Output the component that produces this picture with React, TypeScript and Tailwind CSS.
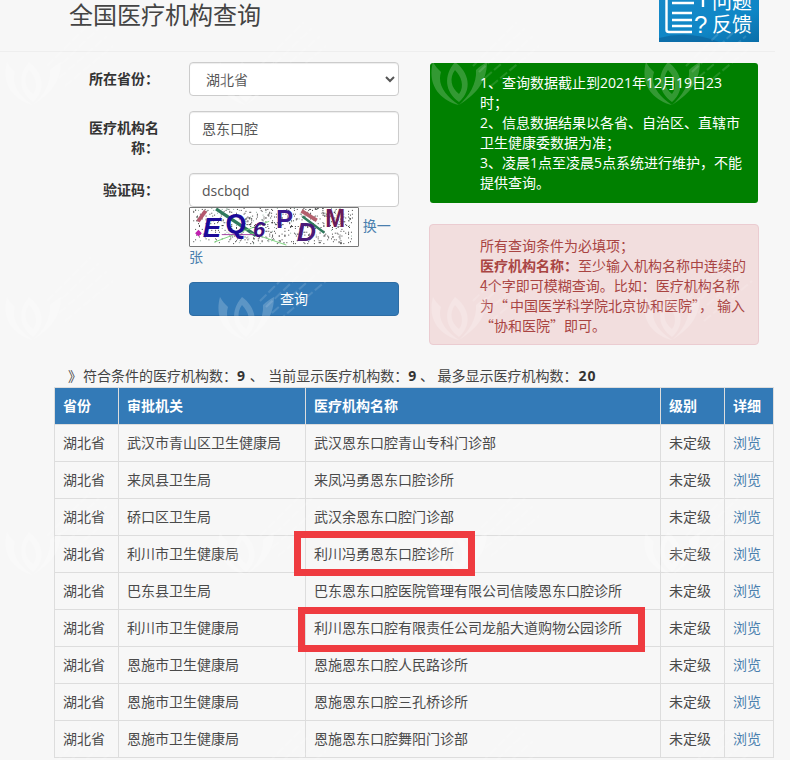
const COLON = "\uFF1A";
const SEMI = "\uFF1B";
const COMMA = "\uFF0C";

const rows: [string, string][] = [
  ["武汉市青山区卫生健康局", "武汉恩东口腔青山专科门诊部"],
  ["来凤县卫生局", "来凤冯勇恩东口腔诊所"],
  ["硚口区卫生局", "武汉余恩东口腔门诊部"],
  ["利川市卫生健康局", "利川冯勇恩东口腔诊所"],
  ["巴东县卫生局", "巴东恩东口腔医院管理有限公司信陵恩东口腔诊所"],
  ["利川市卫生健康局", "利川恩东口腔有限责任公司龙船大道购物公园诊所"],
  ["恩施市卫生健康局", "恩施恩东口腔人民路诊所"],
  ["恩施市卫生健康局", "恩施恩东口腔三孔桥诊所"],
  ["恩施市卫生健康局", "恩施恩东口腔舞阳门诊部"],
];

function noise(i: number, seed: number) {
  const v = Math.sin(i * seed) * 43758.5453;
  return v - Math.floor(v);
}

const dots = Array.from({ length: 620 }, (_, i) => ({
  x: Math.floor(noise(i + 1, 12.9898) * 168),
  y: Math.floor(noise(i + 1, 78.233) * 38),
}));

function Captcha() {
  return (
    <svg width="170" height="40" viewBox="0 0 170 40" className="inline-block align-middle border border-[#777] rounded-[1px] bg-white">
      {dots.map((d, i) => (
        <rect key={i} x={d.x} y={d.y} width="1" height="1" fill={i % 7 === 0 ? "#8a9" : "#333"} />
      ))}
      <line x1="24" y1="1" x2="66" y2="29" stroke="#2f7a5c" strokeWidth="3.5" />
      <line x1="5" y1="14" x2="13" y2="3" stroke="#b4586e" strokeWidth="4" />
      <line x1="114" y1="3" x2="130" y2="13" stroke="#b4606e" strokeWidth="4" />
      <line x1="115" y1="9" x2="138" y2="26" stroke="#2f7a5c" strokeWidth="2.5" />
      <line x1="22" y1="36" x2="80" y2="14" stroke="#7cd67c" strokeWidth="1" />
      <line x1="60" y1="26" x2="98" y2="39" stroke="#7cd67c" strokeWidth="1" />
      <line x1="30" y1="28" x2="64" y2="28" stroke="#a040a0" strokeWidth="1" />
      <rect x="3" y="24" width="5" height="5" fill="#c020b0" transform="rotate(45 5.5 26.5)" />
      <g fontFamily="'Liberation Sans', sans-serif" fontWeight="700">
        <text x="10" y="31" fontSize="29" fontStyle="italic" fill="#1c0a98">E</text>
        <text x="34" y="26" fontSize="30" fill="#1c0a98" textLength="22" lengthAdjust="spacingAndGlyphs">Q</text>
        <text x="63" y="31" fontSize="23" fontStyle="italic" fill="#3a1080">6</text>
        <text x="87" y="21" fontSize="27" fill="#3a1a90">P</text>
        <text x="109" y="35" fontSize="28" fontStyle="italic" fill="#4a1a78">D</text>
        <text x="139" y="20" fontSize="28" fill="#6a1a58" textLength="21" lengthAdjust="spacingAndGlyphs">M</text>
      </g>
    </svg>
  );
}

function Logo() {
  return (
    <svg width="100" height="42" viewBox="0 0 100 42" className="block">
      <defs>
        <linearGradient id="lg" x1="0" y1="0" x2="1" y2="1">
          <stop offset="0" stopColor="#1689c8" />
          <stop offset="0.6" stopColor="#0f86c6" />
          <stop offset="1" stopColor="#0a6ea8" />
        </linearGradient>
      </defs>
      <rect width="100" height="42" fill="url(#lg)" />
      <path d="M0 38 Q30 30 60 42 L0 42 Z" fill="#0b5f97" opacity="0.6" />
      <path d="M7.5 -2 V30 Q7.5 32 10 32 H33" fill="none" stroke="#fff" strokeWidth="2.4" />
      <path d="M13 3 H35 M13 13 H33 M13 20 H33 M13 26 H33" stroke="#fff" strokeWidth="2.6" />
      <path d="M44 -2 V7" stroke="#fff" strokeWidth="2.4" />
      <text x="35" y="33" fontSize="24" fill="#fff" fontFamily="'Liberation Sans', sans-serif">?</text>
      <g fill="#fff" fontSize="20" fontFamily="'Noto Sans CJK SC', sans-serif">
        <text x="53" y="9">问题</text>
        <text x="53" y="32">反馈</text>
      </g>
    </svg>
  );
}

function Watermark() {
  return (
    <svg width="790" height="760" className="absolute left-0 top-0 pointer-events-none">
      <defs>
        <pattern id="wm" x="3" y="0" width="213" height="235" patternUnits="userSpaceOnUse">
          <g fill="#fff" opacity="0.2">
            <path d="M30 105 C10 100 -2 84 4 62 C6 66 9 69 12 72 C8 84 16 96 30 105 Z" />
            <path d="M30 105 C44 96 58 84 58 62 C54 64 50 67 47 70 C48 84 40 96 30 105 Z" />
            <path fillRule="evenodd" d="M30 102 C16 92 14 76 26 62 C40 72 44 90 30 102 Z M30 94 C36 86 32 76 26 70 C20 78 22 88 30 94 Z" />
          </g>
          <g fill="none" stroke="#fff" strokeWidth="2" opacity="0.13" strokeDasharray="9 3">
            <path d="M44 66 L88 22 M50 72 L96 28 M56 78 L104 36 M62 86 L110 46" />
          </g>
        </pattern>
      </defs>
      <rect width="790" height="760" fill="url(#wm)" />
    </svg>
  );
}

const inputClass =
  "block w-[210px] h-[34px] px-3 bg-white border border-[#ccc] rounded text-sm text-[#555] shadow-[inset_0_1px_1px_rgba(0,0,0,0.075)]";
const labelClass = "w-[70px] ml-[89px] mr-[30px] pt-[7px] text-right font-bold text-[#333] shrink-0";
const cell = "border border-[#ddd] px-2 h-[37px] align-middle";
const head = "border border-[#ddd] px-2 h-[37px] align-middle text-left font-bold";

export default function App() {
  return (
    <div
      className="relative w-[790px] h-[760px] overflow-hidden bg-[#f7f7f7] text-sm leading-5 text-[#333]"
      style={{ fontFamily: "'Open Sans', 'Noto Sans CJK SC', sans-serif" }}
    >
      <header className="flex justify-between items-start w-[775px] h-[52px] border-b border-[#eee] pl-[69px] pr-4">
        <h1 className="text-2xl leading-[30px] text-[#444] font-normal">全国医疗机构查询</h1>
        <Logo />
      </header>

      <main className="flex pt-[10px] h-[314px]">
        <form className="w-[430px] shrink-0">
          <div className="flex mb-[15px]">
            <label className={labelClass}>所在省份{COLON}</label>
            <select defaultValue="湖北省" className={inputClass}>
              <option>湖北省</option>
            </select>
          </div>
          <div className="flex mb-[15px]">
            <label className={labelClass}>医疗机构名称{COLON}</label>
            <input readOnly value="恩东口腔" className={inputClass} />
          </div>
          <div className="flex mb-[15px]">
            <label className={labelClass}>验证码{COLON}</label>
            <div className="w-[210px]">
              <input readOnly value="dscbqd" className={inputClass} />
              <Captcha /> <a className="text-[#4a7fae]">换一张</a>
            </div>
          </div>
          <div className="ml-[189px] w-[210px] h-[34px] flex items-center justify-center bg-[#337ab7] border border-[#2e6da4] rounded text-white">
            查询
          </div>
        </form>

        <aside className="w-[328px] mt-px">
          <div className="h-[140px] bg-[#008000] rounded-[3px] text-white py-[10px] pl-[50px] pr-3">
            1、查询数据截止到2021年12月19日23时{SEMI}
            <br />
            2、信息数据结果以各省、自治区、直辖市卫生健康委数据为准{SEMI}
            <br />
            3、凌晨1点至凌晨5点系统进行维护{COMMA}不能提供查询。
          </div>
          <div
            className="w-[330px] -ml-px mt-[21px] h-[121px] bg-[#f2dede] border border-[#ebccd1] rounded text-[#a94442] py-[10px] pl-[50px] pr-2 whitespace-nowrap"
            style={{ fontFamily: "'Noto Sans CJK SC', sans-serif" }}
          >
            所有查询条件为必填项{SEMI}
            <br />
            <b>医疗机构名称{COLON}</b>至少输入机构名称中连续的
            <br />
            4个字即可模糊查询。比如{COLON}医疗机构名称
            <br />
            为{"\u201C"}<span className="ml-[2px]">中国医学科学院北京协和医院</span>{"\u201D"}{COMMA}<span className="ml-1">输入</span>
            <br />
            {"\u201C"}协和医院{"\u201D"}即可。
          </div>
        </aside>
      </main>

      <p className="pl-[68px] h-[21px] text-[#444]">
        》<span className="ml-px">符合条件的医疗机构数{COLON}</span><b className="text-[#333] mr-px">9</b> 、 <span className="ml-px">当前显示医疗机构数{COLON}</span><b className="text-[#333]">9</b> 、 <span>最多显示医疗机构数{COLON}</span><b className="text-[#333] ml-px tracking-[1px]">20</b>
      </p>

      <table className="ml-[54px] w-[719px] table-fixed border-collapse text-[#4a4a4a]">
        <colgroup>
          <col className="w-[64px]" />
          <col className="w-[187px]" />
          <col className="w-[355px]" />
          <col className="w-[64px]" />
          <col className="w-[49px]" />
        </colgroup>
        <thead>
          <tr className="bg-[#337ab7] text-white">
            <th className={head}>省份</th>
            <th className={head}>审批机关</th>
            <th className={head}>医疗机构名称</th>
            <th className={head}>级别</th>
            <th className={head}>详细</th>
          </tr>
        </thead>
        <tbody>
          {rows.map((r, i) => (
            <tr key={i}>
              <td className={cell}>湖北省</td>
              <td className={cell}>{r[0]}</td>
              <td className={cell}>{r[1]}</td>
              <td className={cell}>未定级</td>
              <td className={`${cell} text-[#4a7fae]`}>浏览</td>
            </tr>
          ))}
        </tbody>
      </table>

      <Watermark />
      <div className="absolute left-[294px] top-[531px] w-[181px] h-[45px] border-[7px] border-[#ef3b40]" />
      <div className="absolute left-[298px] top-[607px] w-[347px] h-[45px] border-[7px] border-[#ef3b40]" />
    </div>
  );
}
